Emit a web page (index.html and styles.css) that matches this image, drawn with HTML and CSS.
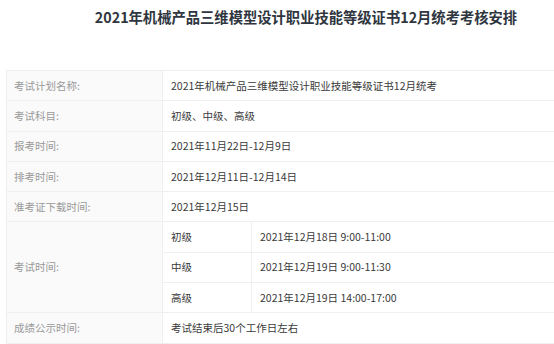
FILE: index.html
```html
<!DOCTYPE html>
<html lang="zh">
<head>
<meta charset="utf-8">
<link rel="stylesheet" href="styles.css">
</head>
<body>
<div class="page">
  <h1 class="title">2021年机械产品三维模型设计职业技能等级证书12月统考考核安排</h1>
  <table class="info">
    <colgroup>
      <col class="c-label">
      <col class="c-sub">
      <col class="c-val">
    </colgroup>
    <tbody>
      <tr><th>考试计划名称:</th><td colspan="2">2021年机械产品三维模型设计职业技能等级证书12月统考</td></tr>
      <tr><th>考试科目:</th><td colspan="2">初级、中级、高级</td></tr>
      <tr><th>报考时间:</th><td colspan="2">2021年11月22日-12月9日</td></tr>
      <tr><th>排考时间:</th><td colspan="2">2021年12月11日-12月14日</td></tr>
      <tr><th>准考证下载时间:</th><td colspan="2">2021年12月15日</td></tr>
      <tr><th rowspan="3">考试时间:</th><td>初级</td><td>2021年12月18日 9:00-11:00</td></tr>
      <tr><td>中级</td><td>2021年12月19日 9:00-11:30</td></tr>
      <tr><td>高级</td><td>2021年12月19日 14:00-17:00</td></tr>
      <tr><th>成绩公示时间:</th><td colspan="2">考试结束后30个工作日左右</td></tr>
    </tbody>
  </table>
</div>
</body>
</html>
```
FILE: styles.css
```css
html, body {
  margin: 0;
  padding: 0;
  background: #fff;
  overflow: hidden;
}
body {
  font-family: "Noto Sans CJK SC", "Noto Sans", sans-serif;
}
.page {
  width: 548px;
  margin-left: 6px;
}
.title {
  margin: 0;
  padding: 6px 0 0 52px;
  height: 70px;
  box-sizing: border-box;
  text-align: center;
  font-size: 14.3px;
  line-height: 22px;
  font-weight: 700;
  color: #2f3640;
  white-space: nowrap;
}
.info {
  width: 548px;
  border-collapse: collapse;
  table-layout: fixed;
  font-size: 10.5px;
}
.c-label { width: 156px; }
.c-sub { width: 89px; }
.info th, .info td {
  border: 1px solid #efefef;
  height: 29.3px;
  padding: 0 0 0 8px;
  text-align: left;
  vertical-align: middle;
  white-space: nowrap;
  line-height: 14px;
}
.info td:last-child {
  border-right: 0;
}
.info th {
  background: #fafafa;
  color: #999;
  font-weight: 400;
  padding-left: 7px;
}
.info td {
  color: #3a3a3a;
}
```
